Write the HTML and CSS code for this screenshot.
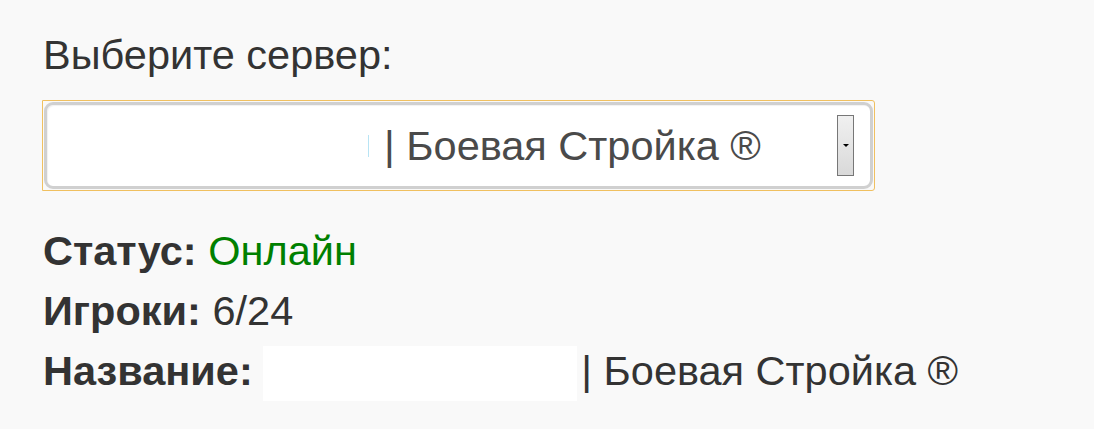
FILE: index.html
```html
<!DOCTYPE html>
<html lang="ru">
<head>
<meta charset="utf-8">
<link rel="stylesheet" href="styles.css">
</head>
<body>
<div class="page">
  <div class="label">Выберите сервер:</div>
  <div class="select-wrap">
    <div class="select">
      <div class="select-value">
        <span class="mask"><span class="caret"></span></span>
        <span class="select-text">| Боевая Стройка ®</span>
      </div>
      <div class="select-btn"><span class="arrow"></span></div>
    </div>
  </div>
  <div class="info">
    <div class="row"><b>Статус:</b> <span class="online">Онлайн</span></div>
    <div class="row"><b>Игроки:</b> 6/24</div>
    <div class="row"><b>Название:</b> <span class="name-mask"></span>| Боевая Стройка ®</div>
  </div>
</div>
</body>
</html>
```
FILE: styles.css
```css
html, body {
  margin: 0;
  padding: 0;
  background: #f9f9f9;
}
body {
  font-family: "Liberation Sans", Arial, sans-serif;
  color: #333;
  width: 1094px;
  height: 429px;
  overflow: hidden;
}
.page {
  padding: 32px 0 0 43px;
}
.label {
  font-size: 41.5px;
  line-height: 46px;
}
.select-wrap {
  margin-top: 22px;
  margin-left: -1px;
  width: 831px;
  height: 89px;
  border: 1px solid #f0c060;
  border-top-right-radius: 3px;
  border-bottom-right-radius: 3px;
}
.select {
  box-sizing: border-box;
  margin: 1px;
  height: 87px;
  background: #fff;
  border: 3px solid #d0d0d0;
  border-radius: 9px;
  display: flex;
  align-items: center;
  box-shadow: inset 1px 1px 1px rgba(0,0,0,0.06);
}
.select-value {
  flex: 1;
  display: flex;
  align-items: center;
  font-size: 41.5px;
  color: #4a4a4a;
}
.mask {
  width: 324px;
  height: 30px;
  position: relative;
}
.caret {
  position: absolute;
  right: 2px;
  top: 4px;
  width: 1px;
  height: 22px;
  background: #b8e4f4;
}
.select-text {
  margin-left: 13px;
  line-height: 46px;
}
.select-btn {
  box-sizing: border-box;
  width: 17px;
  height: 61px;
  margin-right: 16px;
  border: 1px solid #777;
  background: linear-gradient(#f0f0f0, #e6e6e6 45%, #d9d9d9);
  display: flex;
  align-items: center;
  justify-content: center;
}
.arrow {
  width: 0;
  height: 0;
  border-left: 3px solid transparent;
  border-right: 3px solid transparent;
  border-top: 3px solid #000;
}
.info {
  margin-top: 30px;
  font-size: 41.5px;
  line-height: 60px;
}
.row {
  white-space: nowrap;
}
.row b {
  font-weight: bold;
}
.online {
  color: #008000;
}
.name-mask {
  display: inline-block;
  vertical-align: top;
  width: 314px;
  height: 55px;
  margin-top: 5px;
  background: #fff;
  margin-left: -1px;
  margin-right: 4px;
}
```
